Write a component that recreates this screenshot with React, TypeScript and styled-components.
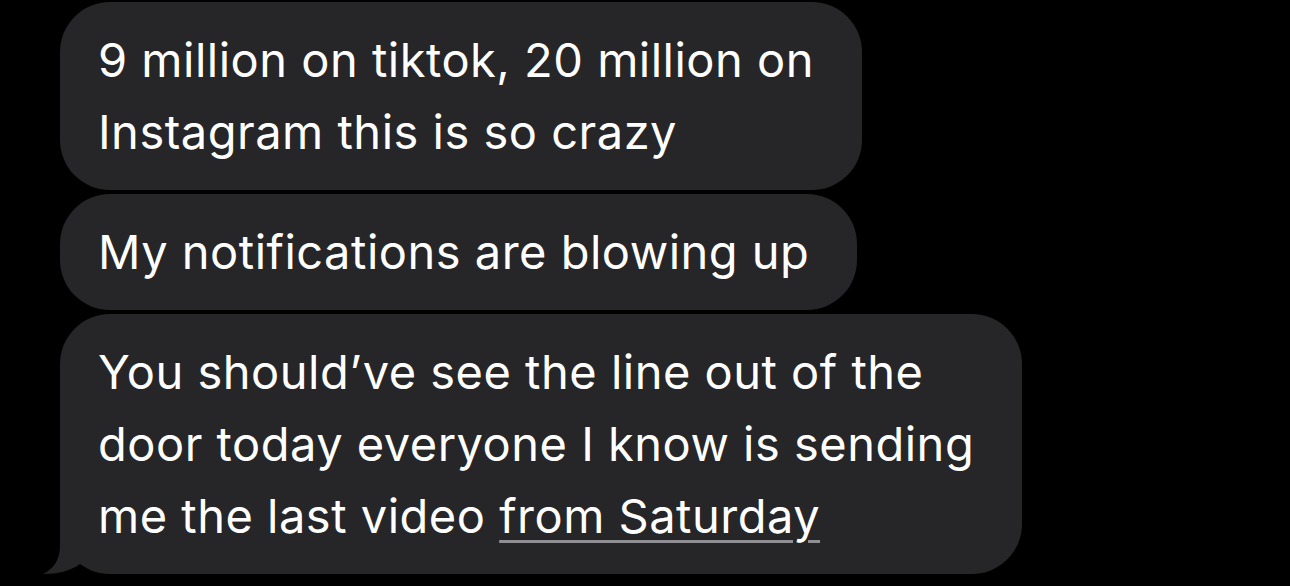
import React from "react";
import styled, { createGlobalStyle } from "styled-components";

const Global = createGlobalStyle`
  html, body { margin: 0; padding: 0; background: #000; }
  body { font-family: Inter, "Noto Sans", "Liberation Sans", sans-serif; }
`;

const Thread = styled.div`
  display: flex;
  flex-direction: column;
  align-items: flex-start;
  gap: 4px;
  padding: 2px 0 0 60px;
  width: 1290px;
  height: 586px;
  box-sizing: border-box;
  background: #000;
  overflow: hidden;
`;

const Bubble = styled.div`
  position: relative;
  background: #262629;
  color: #fff;
  font-size: 47px;
  line-height: 72px;
  letter-spacing: 0.5px;
  padding: 22px 48px 22px 38px;
  border-radius: 50px;
  white-space: nowrap;
`;

const Link = styled.span`
  text-decoration: underline;
  text-decoration-color: #8e8e93;
  text-decoration-thickness: 3px;
  text-underline-offset: 7px;
`;

const Tail = styled.svg`
  position: absolute;
  left: -20px;
  bottom: 0;
  width: 60px;
  height: 80px;
  overflow: visible;
`;

export default function App() {
  return (
    <>
      <Global />
      <Thread>
        <Bubble>
          9 million on tiktok, 20 million on
          <br />
          Instagram this is so crazy
        </Bubble>
        <Bubble>My notifications are blowing up</Bubble>
        <Bubble>
          You should’ve see the line out of the
          <br />
          door today everyone I know is sending
          <br />
          me the last video <Link>from Saturday</Link>
          <Tail viewBox="0 0 60 80">
            <path
              d="M20,7 L20,52 C20,67 12,76 3,80 C18,80 30,77 40,70 L50,7 Z"
              fill="#262629"
            />
          </Tail>
        </Bubble>
      </Thread>
    </>
  );
}
